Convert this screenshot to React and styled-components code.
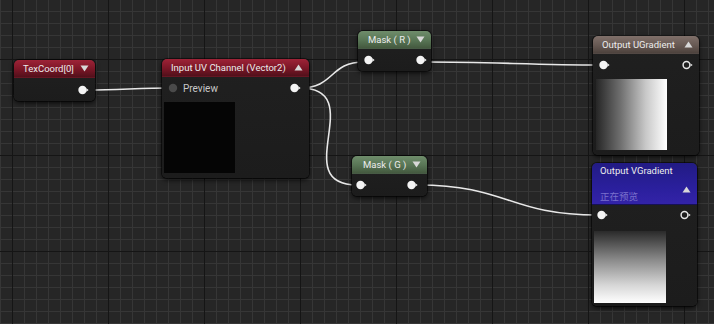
import styled, { createGlobalStyle } from "styled-components";

const GlobalStyle = createGlobalStyle`
  html, body {
    margin: 0;
    padding: 0;
    background: #262626;
    overflow: hidden;
  }
`;

const tones = {
  red: "linear-gradient(180deg, #9e2337 0%, #7a1626 55%, #52101b 100%)",
  green: "linear-gradient(180deg, #6f8d6b 0%, #587555 55%, #44593f 100%)",
  brown: "linear-gradient(180deg, #80706a 0%, #675953 55%, #4d423d 100%)",
  blue: "linear-gradient(180deg, #221b84 0%, #2a1f9c 60%, #3323a8 100%)",
};

const Canvas = styled.div`
  position: relative;
  width: 714px;
  height: 324px;
  overflow: hidden;
  font-family: Roboto, "Noto Sans", "Noto Sans CJK SC", sans-serif;
  background-color: #262626;
  background-image:
    linear-gradient(to right, #151515 1px, transparent 1px),
    linear-gradient(to bottom, #151515 1px, transparent 1px),
    linear-gradient(to right, #363636 1px, transparent 1px),
    linear-gradient(to bottom, #363636 1px, transparent 1px);
  background-size: 96px 96px, 96px 96px, 12px 12px, 12px 12px;
  background-position: 12px 0, 0 59px, 0 0, 0 11px;
`;

const Wires = styled.svg`
  position: absolute;
  left: 0;
  top: 0;
  width: 714px;
  height: 324px;
  pointer-events: none;
`;

const Node = styled.div`
  position: absolute;
  left: ${(p) => p.$x}px;
  top: ${(p) => p.$y}px;
  width: ${(p) => p.$w}px;
  height: ${(p) => p.$h}px;
  display: flex;
  flex-direction: column;
  background: linear-gradient(180deg, #202020 0%, #1c1c1c 100%);
  border-radius: 5px;
  overflow: hidden;
  box-shadow: 0 2px 5px rgba(0, 0, 0, 0.75), 0 0 0 1px rgba(0, 0, 0, 0.5);
`;

const Header = styled.div`
  display: flex;
  flex-direction: column;
  justify-content: center;
  height: ${(p) => p.$h || 18}px;
  padding: 0 6px 0 ${(p) => p.$pl || 9}px;
  background: ${(p) => tones[p.$tone]};
  color: #ececec;
  font-size: 9.5px;
  font-weight: 400;
  box-sizing: border-box;
  border-bottom: 1px solid rgba(0, 0, 0, 0.35);
`;

const TitleRow = styled.div`
  display: flex;
  align-items: center;
  justify-content: space-between;
  white-space: nowrap;
`;

const SubTitle = styled.div`
  color: #7a70cc;
  font-size: 9.5px;
  margin-top: 13px;
  font-family: "Noto Sans CJK SC", sans-serif;
`;

const Body = styled.div`
  flex: 1;
  display: flex;
  flex-direction: column;
`;

const PinRow = styled.div`
  display: flex;
  align-items: center;
  justify-content: space-between;
  height: ${(p) => p.$h || 20}px;
  padding: 0 ${(p) => p.$pr || 6}px 0 ${(p) => p.$pl || 6}px;
`;

const PinLabel = styled.span`
  display: flex;
  align-items: center;
  gap: 4px;
  color: #c8c8c8;
  font-size: 10px;
`;

const Preview = styled.div`
  width: ${(p) => p.$size}px;
  height: ${(p) => p.$size}px;
  margin: ${(p) => p.$m};
  background: ${(p) => p.$bg};
`;

const Tri = ({ up }) => (
  <svg width="9" height="7" viewBox="0 0 9 7">
    <path d={up ? "M4.5 0.5 L8.5 6.5 L0.5 6.5 Z" : "M0.5 0.5 L8.5 0.5 L4.5 6.5 Z"} fill="#d8d8d8" />
  </svg>
);

const Pin = ({ hollow, dim }) => (
  <svg width="11" height="10" viewBox="0 0 11 10">
    {dim ? (
      <circle cx="5" cy="5" r="4.2" fill="#4a4a4a" />
    ) : hollow ? (
      <>
        <circle cx="4.5" cy="5" r="3.4" fill="none" stroke="#e6e6e6" strokeWidth="1.5" />
        <path d="M8.6 3.4 L10.6 5 L8.6 6.6 Z" fill="#e6e6e6" />
      </>
    ) : (
      <>
        <circle cx="4.5" cy="5" r="4.2" fill="#f4f4f4" />
        <path d="M8.4 3.2 L10.6 5 L8.4 6.8 Z" fill="#f4f4f4" />
      </>
    )}
  </svg>
);

const Spacer = styled.span`
  width: 11px;
`;

const wire = (x1, y1, x2, y2, t) =>
  `M${x1} ${y1} C${x1 + t} ${y1} ${x2 - t} ${y2} ${x2} ${y2}`;

const App = () => {
  return (
    <Canvas>
      <GlobalStyle />
      <Wires viewBox="0 0 714 324">
        <g fill="none" stroke="#e8e8e8" strokeWidth="1.6" strokeLinecap="round">
          <path d={wire(88, 90, 170, 88, 30)} />
          <path d={wire(300, 88, 364, 62, 35)} />
          <path d={wire(300, 88, 357, 185, 70)} />
          <path d={wire(427, 62, 599, 65, 60)} />
          <path d={wire(418, 185, 598, 215, 90)} />
        </g>
      </Wires>

      <Node $x={14} $y={60} $w={81} $h={41}>
        <Header $tone="red">
          <TitleRow>
            TexCoord[0]
            <Tri />
          </TitleRow>
        </Header>
        <Body>
          <PinRow $h={23} $pr={6}>
            <span />
            <Pin />
          </PinRow>
        </Body>
      </Node>

      <Node $x={162} $y={59} $w={147} $h={119}>
        <Header $tone="red">
          <TitleRow>
            Input UV Channel (Vector2)
            <Tri up />
          </TitleRow>
        </Header>
        <Body>
          <PinRow $h={22} $pl={6} $pr={8}>
            <PinLabel>
              <Pin dim />
              Preview
            </PinLabel>
            <Pin />
          </PinRow>
          <Preview $size={71} $m="3px 0 0 2px" $bg="#050505" />
        </Body>
      </Node>

      <Node $x={358} $y={31} $w={73} $h={40}>
        <Header $tone="green" $pl={10}>
          <TitleRow>
            Mask ( R )
            <Tri />
          </TitleRow>
        </Header>
        <Body>
          <PinRow $h={22} $pl={6} $pr={4}>
            <Pin />
            <Pin />
          </PinRow>
        </Body>
      </Node>

      <Node $x={352} $y={156} $w={75} $h={40}>
        <Header $tone="green" $pl={11}>
          <TitleRow>
            Mask ( G )
            <Tri />
          </TitleRow>
        </Header>
        <Body>
          <PinRow $h={22} $pl={4} $pr={9}>
            <Pin />
            <Pin />
          </PinRow>
        </Body>
      </Node>

      <Node $x={593} $y={36} $w={106} $h={119}>
        <Header $tone="brown" $pl={9}>
          <TitleRow>
            Output UGradient
            <Tri up />
          </TitleRow>
        </Header>
        <Body>
          <PinRow $h={22} $pl={6} $pr={6}>
            <Pin />
            <Pin hollow />
          </PinRow>
          <Preview
            $size={71}
            $m="3px 0 0 3px"
            $bg="linear-gradient(90deg, #262626 0%, #707070 35%, #c8c8c8 70%, #ffffff 100%)"
          />
        </Body>
      </Node>

      <Node $x={592} $y={163} $w={105} $h={143}>
        <Header $tone="blue" $h={42} $pl={8}>
          <TitleRow>
            Output VGradient
            <Spacer />
          </TitleRow>
          <TitleRow>
            <SubTitle>正在预览</SubTitle>
            <Tri up />
          </TitleRow>
        </Header>
        <Body>
          <PinRow $h={20} $pl={5} $pr={6}>
            <Pin />
            <Pin hollow />
          </PinRow>
          <Preview
            $size={72}
            $m="6px 0 0 2px"
            $bg="linear-gradient(180deg, #2a2a2a 0%, #8a8a8a 40%, #d6d6d6 75%, #ffffff 100%)"
          />
        </Body>
      </Node>
    </Canvas>
  );
};

export default App;
